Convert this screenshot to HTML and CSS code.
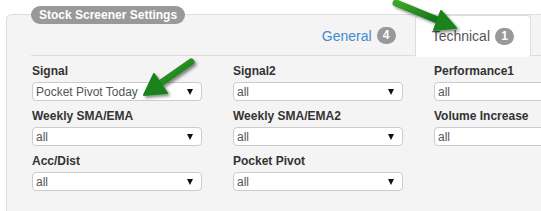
FILE: index.html
```html
<!DOCTYPE html>
<html>
<head>
<meta charset="utf-8">
<link rel="stylesheet" href="styles.css">
</head>
<body>
<div class="fieldset">
  <div class="panel">
    <div class="tabs">
      <div class="tab tab-link">General <span class="badge">4</span></div>
      <div class="tab tab-active">Technical <span class="badge">1</span></div>
    </div>
    <div class="form">
      <div class="field"><div class="lbl">Signal</div><div class="sel"><span class="val">Pocket Pivot Today</span><span class="caret"></span></div></div>
      <div class="field"><div class="lbl">Signal2</div><div class="sel"><span class="val">all</span><span class="caret"></span></div></div>
      <div class="field"><div class="lbl">Performance1</div><div class="sel"><span class="val">all</span><span class="caret"></span></div></div>
      <div class="field"><div class="lbl">Weekly SMA/EMA</div><div class="sel"><span class="val">all</span><span class="caret"></span></div></div>
      <div class="field"><div class="lbl">Weekly SMA/EMA2</div><div class="sel"><span class="val">all</span><span class="caret"></span></div></div>
      <div class="field"><div class="lbl">Volume Increase</div><div class="sel"><span class="val">all</span><span class="caret"></span></div></div>
      <div class="field"><div class="lbl">Acc/Dist</div><div class="sel"><span class="val">all</span><span class="caret"></span></div></div>
      <div class="field"><div class="lbl">Pocket Pivot</div><div class="sel"><span class="val">all</span><span class="caret"></span></div></div>
    </div>
  </div>
  <div class="legend">Stock Screener Settings</div>
</div>
<svg class="arrows" width="541" height="211" viewBox="0 0 541 211">
  <defs>
    <filter id="sh" x="-20%" y="-20%" width="140%" height="140%">
      <feDropShadow dx="2" dy="2" stdDeviation="1.5" flood-color="#000" flood-opacity="0.45"/>
    </filter>
    <linearGradient id="g1" x1="0" y1="0" x2="1" y2="1">
      <stop offset="0" stop-color="#3da52c"/>
      <stop offset="1" stop-color="#11701a"/>
    </linearGradient>
  </defs>
  <g filter="url(#sh)">
    <line x1="191" y1="62" x2="158" y2="85" stroke="url(#g1)" stroke-width="7" stroke-linecap="round"/>
    <polygon points="144,95 154,74 167,93" fill="#1a821f" stroke="#1a821f" stroke-width="2" stroke-linejoin="round"/>
  </g>
  <g filter="url(#sh)">
    <line x1="396" y1="3" x2="440" y2="21" stroke="url(#g1)" stroke-width="7" stroke-linecap="round"/>
    <polygon points="456,28 434,30 441,11" fill="#1a821f" stroke="#1a821f" stroke-width="2" stroke-linejoin="round"/>
  </g>
</svg>
</body>
</html>
```
FILE: styles.css
```css
html, body {
  margin: 0;
  padding: 0;
  background: #fff;
  overflow: hidden;
}
body {
  font-family: "Liberation Sans", Arial, sans-serif;
  width: 541px;
  height: 211px;
  position: relative;
}
.fieldset {
  position: relative;
  padding: 14px 0 0 6px;
}
.panel {
  box-sizing: border-box;
  width: 535px;
  height: 197px;
  overflow: hidden;
  border-top: 1px solid #dddddd;
  border-left: 1px solid #dddddd;
  border-radius: 6px 0 0 0;
  background: #f4f4f4;
}
.legend {
  position: absolute;
  top: 6px;
  left: 31px;
  height: 18px;
  line-height: 18px;
  padding: 0 8px;
  border-radius: 9px;
  background: #999999;
  color: #ffffff;
  font-weight: bold;
  font-size: 12px;
  white-space: nowrap;
}
.tabs {
  display: flex;
  justify-content: flex-end;
  margin-left: 24px;
  padding-right: 10px;
  height: 40px;
  border-bottom: 1px solid #dddddd;
}
.tab {
  height: 39px;
  margin-bottom: -1px;
  padding: 0 16px;
  border: 1px solid transparent;
  border-radius: 4px 4px 0 0;
  display: flex;
  align-items: center;
  font-size: 14px;
  white-space: nowrap;
}
.tab-link {
  color: #428bca;
  margin-right: 2px;
}
.tab-active {
  color: #555555;
  background: #ffffff;
  border-color: #dddddd;
  border-bottom-color: #ffffff;
  height: 40px;
}
.badge {
  display: inline-block;
  margin-left: 5px;
  min-width: 7px;
  padding: 0 6px;
  height: 17px;
  line-height: 17px;
  border-radius: 9px;
  background: #999999;
  color: #ffffff;
  font-size: 12px;
  font-weight: bold;
  text-align: center;
}
.form {
  display: grid;
  grid-template-columns: 170px 170px 170px;
  column-gap: 31px;
  row-gap: 8px;
  padding-left: 25px;
  margin-top: 8px;
}
.lbl {
  font-size: 12px;
  font-weight: bold;
  color: #333333;
  line-height: 15px;
  margin-bottom: 3px;
  white-space: nowrap;
}
.sel {
  height: 17px;
  border: 1px solid #cccccc;
  border-radius: 4px;
  background: #ffffff;
  display: flex;
  align-items: center;
  padding: 0 8px 0 3px;
  font-size: 12px;
  color: #555555;
}
.val {
  flex: 1;
  white-space: nowrap;
}
.caret {
  width: 0;
  height: 0;
  border-left: 3.5px solid transparent;
  border-right: 3.5px solid transparent;
  border-top: 6px solid #111111;
}
.arrows {
  position: absolute;
  left: 0;
  top: 0;
  pointer-events: none;
}
```
